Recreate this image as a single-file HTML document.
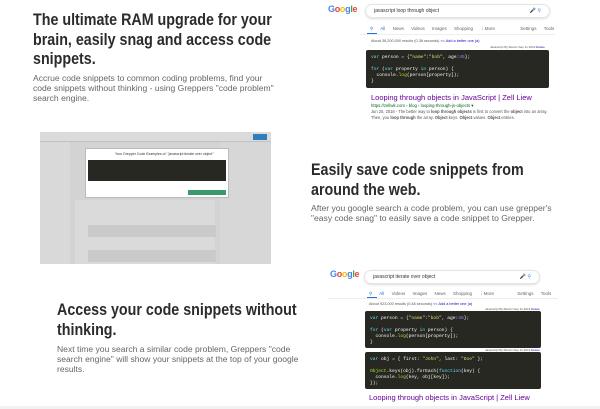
<!DOCTYPE html>
<html><head><meta charset="utf-8"><style>
*{margin:0;padding:0;box-sizing:border-box}
body{width:600px;height:409px;background:#fff;font-family:"Liberation Sans",sans-serif;position:relative;overflow:hidden}
.a{position:absolute}
h1{position:absolute;font-size:17px;line-height:19.5px;color:#2b2b2b;font-weight:bold;white-space:nowrap;transform:scaleX(0.84);transform-origin:0 0}
p.t{position:absolute;font-size:8px;line-height:10px;color:#666;white-space:nowrap;transform:scaleX(1.07);transform-origin:0 0}
.g{font-size:9px;font-weight:bold;letter-spacing:-0.3px}
.sb{border:1px solid #e4e4e4;border-radius:8px;box-shadow:0 1px 2px #ddd;font-size:5px;color:#333;padding:3px 8px}
.tabs{font-size:4.5px;color:#666}
.code{background:#272822;border-radius:2px;font-family:"Liberation Mono",monospace;font-size:4.6px;line-height:6px;color:#f8f8f2;padding:5px 5px}
.k{color:#66d9ef}.s{color:#e6db74}.n{color:#ae81ff}.f{color:#a6e22e}
.lk{color:#660099;font-size:7.5px}
.sm{font-size:3.8px;color:#555}
</style></head><body>

<h1 style="left:33px;top:10px">The ultimate RAM upgrade for your<br>brain, easily snag and access code<br>snippets.</h1>
<p class="t" style="left:33px;top:74px">Accrue code snippets to common coding problems, find your<br>code snippets without thinking - using Greppers "code problem"<br>search engine.</p>

<!-- screenshot -->
<div class="a" style="left:40px;top:132px;width:231px;height:132px;background:#f1f1f1;overflow:hidden">
 <div class="a" style="left:0;top:0;width:231px;height:10px;background:#fafafa;border-bottom:1px solid #ddd"></div>
 <div class="a" style="left:213px;top:2px;width:14px;height:6px;background:#3a8fd6"></div>
 <div class="a" style="left:0;top:10px;width:30px;height:122px;background:#f7f7f7"></div>
 <div class="a" style="left:35px;top:68px;width:140px;height:64px;background:#f9f9f9"></div>
 <div class="a" style="left:48px;top:93px;width:128px;height:12px;background:#e6e6e6"></div>
 <div class="a" style="left:48px;top:118px;width:128px;height:12px;background:#e6e6e6"></div>
 <div class="a" style="left:180px;top:10px;width:51px;height:122px;background:#f5f5f5"></div>
 <div class="a" style="left:0;top:0;width:231px;height:132px;background:rgba(0,0,0,0.12)"></div>
 <div class="a" style="left:45px;top:16px;width:144px;height:50px;background:#fff;border:1px solid #bbb"></div>
 <div class="a" style="left:48px;top:28px;width:138px;height:21px;background:#272822"></div>
 <div class="a" style="left:148px;top:58px;width:38px;height:5px;background:#3a9b6a"></div>
 <div class="a" style="left:75px;top:20px;font-size:3.5px;color:#333">Your Grepper Code Examples of: "javascript iterate over object"</div>
</div>

<!-- google top -->
<div class="a g" style="left:328px;top:4px"><span style="color:#4285f4">G</span><span style="color:#ea4335">o</span><span style="color:#fbbc05">o</span><span style="color:#4285f4">g</span><span style="color:#34a853">l</span><span style="color:#ea4335">e</span></div>
<div class="a sb" style="left:365px;top:4px;width:185px;height:14px">javascript loop through object<span style="float:right;color:#4285f4">🎤 ⚲</span></div>
<div class="a tabs" style="left:370px;top:26px;width:190px;word-spacing:6px"><span style="color:#1a73e8">⚲ All</span> News Videos Images Shopping ⋮More <span style="margin-left:18px">Settings Tools</span></div>
<div class="a" style="left:367px;top:33px;width:10px;height:1px;background:#1a73e8"></div>
<div class="a" style="left:360px;top:34px;width:195px;height:1px;background:#eee"></div>
<div class="a sm" style="left:371px;top:39px">About 36,200,000 results (0.36 seconds) <span style="color:#1a0dab">&lt;&lt; Add a better one (a)</span></div>
<div class="a sm" style="left:490px;top:45px;font-size:3px">Javascript By Marvin Sep 11 2019 <span style="color:#1a0dab">Delete</span></div>
<div class="a code" style="left:366px;top:50px;width:183px;height:38px">
<span class="k">var</span> person = {<span class="s">"name"</span>:<span class="s">"bob"</span>, age:<span class="n">45</span>};<br><br>
<span class="k">for</span> (<span class="k">var</span> property <span class="k">in</span> person) {<br>
&nbsp;&nbsp;console.<span class="f">log</span>(person[property]);<br>}</div>
<div class="a lk" style="left:371px;top:93px">Looping through objects in JavaScript | Zell Liew</div>
<div class="a" style="left:371px;top:103px;font-size:4.3px;color:#006621">https://zellwk.com › blog › looping-through-js-objects ▾</div>
<div class="a" style="left:371px;top:109px;font-size:4.1px;line-height:6px;color:#555;width:180px">Jun 20, 2018 - The better way to <b>loop through objects</b> is first to convert the <b>object</b> into an array. Then, you <b>loop through</b> the array. <b>Object</b>.keys. <b>Object</b>.values. <b>Object</b>.entries.</div>

<h1 style="left:311px;top:160px">Easily save code snippets from<br>around the web.</h1>
<p class="t" style="left:311px;top:204px">After you google search a code problem, you can use grepper's<br>"easy code snag" to easily save a code snippet to Grepper.</p>

<h1 style="left:57px;top:300px">Access your code snippets without<br>thinking.</h1>
<p class="t" style="left:57px;top:345px">Next time you search a similar code problem, Greppers "code<br>search engine" will show your snippets at the top of your google<br>results.</p>

<!-- google bottom -->
<div class="a g" style="left:330px;top:269px"><span style="color:#4285f4">G</span><span style="color:#ea4335">o</span><span style="color:#fbbc05">o</span><span style="color:#4285f4">g</span><span style="color:#34a853">l</span><span style="color:#ea4335">e</span></div>
<div class="a sb" style="left:364px;top:270px;width:176px;height:14px">javascript iterate over object<span style="float:right;color:#4285f4">🎤 ⚲</span></div>
<div class="a tabs" style="left:369px;top:291px;width:190px;word-spacing:6px"><span style="color:#1a73e8">⚲ All</span> Videos Images News Shopping ⋮More <span style="margin-left:16px">Settings Tools</span></div>
<div class="a" style="left:367px;top:297px;width:10px;height:1px;background:#1a73e8"></div>
<div class="a" style="left:328px;top:298px;width:230px;height:1px;background:#eee"></div>
<div class="a sm" style="left:369px;top:302px">About 923,000 results (0.48 seconds) <span style="color:#1a0dab">&lt;&lt; Add a better one (a)</span></div>
<div class="a sm" style="left:485px;top:307px;font-size:3px">Javascript By Marvin Sep 11 2019 <span style="color:#1a0dab">Delete</span></div>
<div class="a code" style="left:365px;top:311px;width:176px;height:37px">
<span class="k">var</span> person = {<span class="s">"name"</span>:<span class="s">"bob"</span>, age:<span class="n">45</span>};<br><br>
<span class="k">for</span> (<span class="k">var</span> property <span class="k">in</span> person) {<br>
&nbsp;&nbsp;console.<span class="f">log</span>(person[property]);<br>}</div>
<div class="a sm" style="left:485px;top:348px;font-size:3px">Javascript By Marvin Sep 11 2019 <span style="color:#1a0dab">Delete</span></div>
<div class="a code" style="left:365px;top:352px;width:176px;height:37px">
<span class="k">var</span> obj = { first: <span class="s">"John"</span>, last: <span class="s">"Doe"</span> };<br><br>
<span class="f">Object</span>.keys(obj).forEach(<span class="k">function</span>(key) {<br>
&nbsp;&nbsp;console.<span class="f">log</span>(key, obj[key]);<br>});</div>
<div class="a lk" style="left:369px;top:393px">Looping through objects in JavaScript | Zell Liew</div>
<div class="a" style="left:0;top:406px;width:600px;height:3px;background:#f2f2f2"></div>
</body></html>
